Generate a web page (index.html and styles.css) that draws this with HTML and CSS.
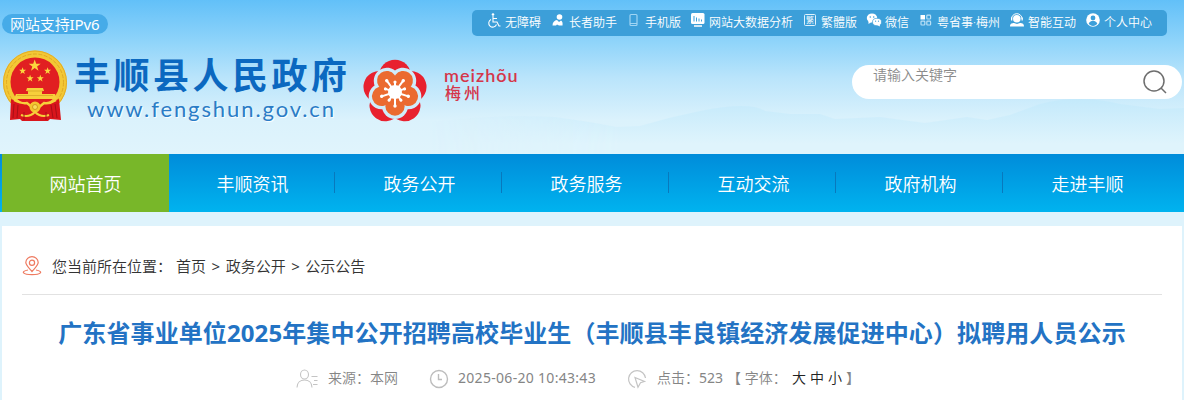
FILE: index.html
```
<!DOCTYPE html>
<html lang="zh-CN">
<head>
    <meta charset="UTF-8">
    <meta name="viewport" content="width=device-width, initial-scale=1.0">
    <title>丰顺县人民政府</title>
    <link rel="stylesheet" href="styles.css">
</head>
<body>
    <header class="header">
        <svg class="hills" width="1184" height="60" viewBox="0 0 1184 60">
            <defs>
                <linearGradient id="hill" gradientUnits="userSpaceOnUse" x1="0" y1="4" x2="0" y2="50">
                    <stop offset="0" stop-color="#c3e9fb"/>
                    <stop offset="1" stop-color="#dff4fc"/>
                </linearGradient>
                <linearGradient id="fade" gradientUnits="userSpaceOnUse" x1="430" y1="0" x2="620" y2="0">
                    <stop offset="0" stop-color="#000"/>
                    <stop offset="1" stop-color="#fff"/>
                </linearGradient>
                <mask id="left"><rect width="1184" height="60" fill="url(#fade)"/></mask>
            </defs>
            <path mask="url(#left)" fill="url(#hill)" d="M430 28 Q500 20 555 23 Q585 27 617 33 L640 32 Q670 23 700 17 Q750 7 765 17 L790 20 L820 20 L835 25 L880 23 L925 29 L967 23 L987 26 L1010 21 L1040 10 Q1078 0 1120 10 L1160 15 L1184 14 V60 H430 Z"/>
        </svg>

        <div class="top">
            <a class="ipv6">网站支持<span class="num">IPv6</span></a>
            <div class="tools">
                <a class="tool"><svg class="ico" viewBox="0 0 20 20"><g fill="none" stroke="#fff" stroke-width="1.1"><path d="M9 6v6h4l2 4h1.500M9 8.500h4M7 9.500a4 4 0 1 0 5.500 5"/></g><circle cx="9" cy="4.500" r="1.300" fill="#fff"/></svg>无障碍</a>
                <a class="tool"><svg class="ico" viewBox="0 0 20 20"><circle cx="11.500" cy="7" r="2.800" fill="#fff"/><path fill="#fff" d="M4.500 15.500c0-3.500 2-5 4.500-5.500L11 12l2-1.500q2 1 1.500 5H11l-2-1-1 1z"/></svg>长者助手</a>
                <a class="tool"><svg class="ico" viewBox="0 0 20 20"><rect x="6" y="4.500" width="7" height="11" rx="1" fill="none" stroke="#9fd5f4" stroke-width="1.200"/><path stroke="#9fd5f4" d="M6 13.500h7"/></svg>手机版</a>
                <a class="tool"><svg class="ico" viewBox="0 0 20 20"><rect x="3" y="3" width="13.500" height="11" rx="1.500" fill="#fff"/><path stroke="#3c9fd9" stroke-width="1" d="M6 6v5.500M8.500 7.500v4M11 8.500v3M13.500 9.500v2"/><path stroke="#fff" stroke-width="1.500" d="M6 16h8"/></svg>网站大数据分析</a>
                <a class="tool"><svg class="ico" viewBox="0 0 20 20"><rect x="4.500" y="4.500" width="11" height="11" rx="1" fill="none" stroke="#dff2fd"/><text x="6" y="13.200" font-size="8" fill="#fff">繁</text></svg>繁體版</a>
                <a class="tool"><svg class="ico" viewBox="0 0 20 20"><ellipse cx="8" cy="8" rx="5.200" ry="4.500" fill="#fff"/><path fill="#fff" d="M4.500 11v3l3-2z"/><ellipse cx="13" cy="12" rx="4.500" ry="3.700" fill="#fff" stroke="#3c9fd9" stroke-width=".7"/><path fill="#fff" d="M13 15l3 1.500-.5-3z"/><g fill="#3c9fd9"><circle cx="6.300" cy="7" r=".8"/><circle cx="9.700" cy="7" r=".8"/><circle cx="11.600" cy="11.200" r=".6"/><circle cx="14.500" cy="11.200" r=".6"/></g></svg>微信</a>
                <a class="tool"><svg class="ico" viewBox="0 0 20 20"><rect x="4.500" y="5" width="4.500" height="4.500" fill="#fff"/><g fill="none" stroke="#b9e0f6" stroke-width="1.200"><rect x="10.800" y="5.200" width="3.800" height="3.800" rx=".8"/><rect x="5" y="11.200" width="3.800" height="3.800" rx=".8"/><rect x="10.800" y="11.200" width="3.800" height="3.800" rx=".8"/></g></svg>粤省事·梅州</a>
                <a class="tool"><svg class="ico" viewBox="0 0 20 20"><path fill="none" stroke="#fff" d="M4.500 9a5.300 5.300 0 0 1 10.600 0"/><circle cx="9.800" cy="8.800" r="3.800" fill="#fff"/><path fill="#fff" d="M4 7.500h1.300v3H4zM14.500 7.500h1.300v3h-1.300zM3 16.500c0-3 2-3.500 4-3.500l3 1 3-1c2 0 4 .5 4 3.500z"/></svg>智能互动</a>
                <a class="tool"><svg class="ico" viewBox="0 0 20 20"><circle cx="10" cy="10" r="6.800" fill="#fff"/><circle cx="10" cy="8" r="2.400" fill="#3c9fd9"/><path fill="#3c9fd9" d="M5.700 13.500c1-2 2.500-2.500 4.300-2.500s3.300.5 4.300 2.500a5 5 0 0 1-8.600 0z"/></svg>个人中心</a>
            </div>
        </div>

        <div class="brand">
            <!-- national emblem -->
            <svg class="emblem" width="72" height="82" viewBox="0 0 72 82">
                <circle cx="35" cy="37.500" r="32" fill="#f3c835"/>
                <circle cx="35" cy="37.500" r="28.500" fill="none" stroke="#e0a824" stroke-width="1" stroke-dasharray="4 1.500"/>
                <circle cx="35" cy="37.500" r="31.500" fill="none" stroke="#e3ac25" stroke-width="1"/>
                <circle cx="35" cy="37" r="24.500" fill="#e11f21"/>
                <path fill="#fbd63d" d="M34.700 14.500l1.500 4.200h4.500l-3.600 2.700 1.400 4.300-3.800-2.600-3.700 2.600 1.300-4.300-3.600-2.700h4.500z"/>
                <g fill="#fbd63d">
                    <path id="s" d="M22.600 22.300l.9 2.500h2.600l-2.100 1.600.8 2.500-2.200-1.500-2.200 1.500.8-2.500-2.100-1.600h2.600z"/>
                    <use href="#s" x="25"/>
                    <use href="#s" x="7.500" y="7.500"/>
                    <use href="#s" x="17.700" y="7.500"/>
                </g>
                <path fill="#f7cf3b" d="M27 43h16l1 3h-2v3h13l2 5H14l2-5h12v-3h-2z"/>
                <path stroke="#cf9a20" stroke-width=".6" d="M27 46h16M17 50.500h36"/>
                <path fill="#d9151c" d="M11 54q10 5 20 3h8q10 2 20-3l2 21-11-1-2 2H22l-2-2-10 1z"/>
                <path fill="none" stroke="#f7cf3b" stroke-width="2.500" d="M14 55q8 4 13 3l6 5h5l6-5q6 1 12-3"/>
                <circle cx="35" cy="62" r="5.500" fill="#f3c52f"/>
                <circle cx="35" cy="62" r="2.500" fill="#f8dc59" stroke="#c98d18" stroke-width=".8"/>
                <path fill="none" stroke="#f7cf3b" stroke-width="2" d="M21 70q8 3 14-3 6 6 14 3"/>
                <path fill="none" stroke="#a80f16" stroke-width="1" d="M14 59l-1 14M18 60l-1 13M55 59l2 14M51 60l2 13M24 67v8M46 67v8"/>
            </svg>
            <div class="name">
                <div class="name-cn">丰顺县人民政府</div>
                <div class="name-url">www.fengshun.gov.cn</div>
            </div>
            <!-- plum blossom -->
            <svg class="plum" width="70" height="70" viewBox="-35 -35 70 70">
                <g fill="#e8212f">
                    <circle cy="-16.500" r="15.800"/>
                    <circle cy="-16.500" r="15.800" transform="rotate(72)"/>
                    <circle cy="-16.500" r="15.800" transform="rotate(144)"/>
                    <circle cy="-16.500" r="15.800" transform="rotate(216)"/>
                    <circle cy="-16.500" r="15.800" transform="rotate(288)"/>
                </g>
                <g fill="#cfecfb">
                    <circle cy="14" r="13"/>
                    <circle cy="14" r="13" transform="rotate(72)"/>
                    <circle cy="14" r="13" transform="rotate(144)"/>
                    <circle cy="14" r="13" transform="rotate(216)"/>
                    <circle cy="14" r="13" transform="rotate(288)"/>
                </g>
                <g fill="#eb6a30">
                    <circle r="14"/>
                    <circle cy="14" r="9.700"/>
                    <circle cy="14" r="9.700" transform="rotate(72)"/>
                    <circle cy="14" r="9.700" transform="rotate(144)"/>
                    <circle cy="14" r="9.700" transform="rotate(216)"/>
                    <circle cy="14" r="9.700" transform="rotate(288)"/>
                </g>
                <g stroke="#fff" stroke-width="2" stroke-linecap="round">
                    <path id="ray" d="M0 0V14M0 0V-10"/>
                    <use href="#ray" transform="rotate(72)"/>
                    <use href="#ray" transform="rotate(144)"/>
                    <use href="#ray" transform="rotate(216)"/>
                    <use href="#ray" transform="rotate(288)"/>
                </g>
                <g fill="#fff">
                    <circle r="7"/>
                    <path id="dots" d="M-1.700 14a1.700 1.700 0 1 0 3.400 0a1.700 1.700 0 1 0-3.400 0M-1.600-10a1.600 1.600 0 1 0 3.200 0a1.600 1.600 0 1 0-3.200 0"/>
                    <use href="#dots" transform="rotate(72)"/>
                    <use href="#dots" transform="rotate(144)"/>
                    <use href="#dots" transform="rotate(216)"/>
                    <use href="#dots" transform="rotate(288)"/>
                </g>
            </svg>
            <div class="city">
                <div class="city-en">meizhõu</div>
                <div class="city-cn">梅州</div>
            </div>
            <form class="search">
                <span class="search-hint">请输入关键字</span>
                <svg class="search-icon" width="26" height="26" viewBox="0 0 26 26"><g fill="none" stroke="#6e6e6e" stroke-width="1.500"><circle cx="12" cy="12" r="10"/><path d="M19 19l5 5"/></g></svg>
            </form>
        </div>
    </header>

    <nav class="nav">
        <a class="nav-item active">网站首页</a>
        <a class="nav-item">丰顺资讯</a>
        <a class="nav-item">政务公开</a>
        <a class="nav-item">政务服务</a>
        <a class="nav-item">互动交流</a>
        <a class="nav-item">政府机构</a>
        <a class="nav-item">走进丰顺</a>
    </nav>

    <main class="content">
        <div class="crumbs">
            <svg class="pin" width="20" height="20" viewBox="0 0 20 20"><g fill="none" stroke="#ee7a60" stroke-width="1.200"><path d="M10 15.500C6 11 3.800 9 3.800 6.600a6.200 6.000 0 0 1 12.400 0C16.200 9 14 11 10 15.500z"/><circle cx="10" cy="6.800" r="2.600"/><path d="M6 14c-8 1.500-5 4.700 4 4.700s12-3.200 4-4.700"/></g></svg>
            <span class="crumbs-label">您当前所在位置：</span>
            <a>首页</a>
            <span class="num">&gt;</span>
            <a>政务公开</a>
            <span class="num">&gt;</span>
            <a>公示公告</a>
        </div>

        <h1 class="title">广东省事业单位2025年集中公开招聘高校毕业生（丰顺县丰良镇经济发展促进中心）拟聘用人员公示</h1>

        <div class="meta">
            <svg class="meta-icon" width="22" height="20" viewBox="0 0 22 20"><g fill="none" stroke="#c4c4c4" stroke-width="1.100"><ellipse cx="8.500" cy="5.500" rx="4" ry="4.500"/><path d="M1 18.500c0-5 3.500-7.500 7.500-7.500s7.500 2.500 7.500 7.500M15.500 7.500h6M18 11.500h3.500M17 15.500h4.500"/></g></svg>
            <span class="source">来源：本网</span>
            <svg class="meta-icon" width="20" height="20" viewBox="0 0 20 20"><g fill="none" stroke="#bdbdbd" stroke-width="1.400"><circle cx="10" cy="10" r="8.500"/><path d="M9.500 5v5.500H13"/></g></svg>
            <span class="date num">2025-06-20 10:43:43</span>
            <svg class="meta-icon" width="20" height="20" viewBox="0 0 20 20"><g fill="none" stroke="#c4c4c4" stroke-width="1.200"><path d="M8 18.300A8.500 8.500 0 1 1 18.500 9"/><path d="M8 8.500l9.500 4-4 1.300-2.500 4.500z"/></g></svg>
            <span class="hits">点击：<span class="num">523</span></span>
            <span class="size">【 字体：</span>
            <span class="sizes"><a>大</a><a>中</a><a>小</a></span>
            <span class="size-end">】</span>
        </div>
    </main>
</body>
</html>
```
FILE: styles.css
```
* {
    box-sizing: border-box;
}
body {
    margin: 0;
    height: 400px;
    overflow: hidden;
    background: #def3fc;
    color: #333;
    font-family: 'Noto Sans', 'Noto Sans CJK SC', sans-serif;
    font-weight: 350;
}
.num {
    font-weight: 400;
}
.header {
    position: relative;
    height: 154px;
    background: linear-gradient(180deg, #62c0f8 0%, #8fd4fa 27%, #b9e4fb 50%, #dbf2fc 78%, #e0f4fc 100%);
}
.hills {
    position: absolute;
    left: 0;
    bottom: 0;
}
.top {
    position: relative;
    display: flex;
    justify-content: space-between;
    height: 45px;
    padding: 10px 17px 0 2px;
    color: #fff;
}
.ipv6 {
    width: 106px;
    height: 20px;
    margin-top: 4px;
    padding: 0 8px;
    border-radius: 10px;
    background: #46abe8;
    font-size: 15px;
    line-height: 20px;
    letter-spacing: -.1px;
    white-space: nowrap;
}
.tools {
    display: flex;
    width: 695px;
    height: 26px;
    padding: 0 0 0 5px;
    border-radius: 5px;
    background: #3c9fd9;
    font-size: 12px;
    line-height: 26px;
    white-space: nowrap;
}
.tool {
    display: flex;
    margin-left: 7px;
}
.ico {
    width: 20px;
    height: 20px;
    margin-right: 1px;
    flex: none;
}
.brand {
    position: relative;
    display: flex;
    align-items: flex-start;
}
.name {
    margin-left: 2px;
    width: 286px;
    white-space: nowrap;
}
.name-cn {
    margin-top: 10px;
    font-size: 36px;
    font-weight: 700;
    letter-spacing: 3.5px;
    line-height: 42px;
    color: #0b68c0;
}
.name-url {
    margin-left: 13px;
    font-family: Lato, sans-serif;
    font-size: 22px;
    font-weight: 400;
    letter-spacing: 1.9px;
    line-height: 24px;
    color: #2a7cc6;
    text-shadow: 1px 1px 1px #fff;
}
.plum {
    margin-top: 12px;
}
.city {
    margin: 20px 0 0 14px;
    color: #d5354a;
    white-space: nowrap;
}
.city-en {
    font-family: Lato, sans-serif;
    font-size: 18px;
    font-weight: 600;
    letter-spacing: 1px;
    line-height: 20px;
}
.city-cn {
    padding-left: 1px;
    font-size: 16px;
    font-weight: 500;
    letter-spacing: 3px;
    line-height: 16px;
}
.search {
    display: flex;
    justify-content: space-between;
    width: 330px;
    height: 34px;
    margin: 20px 2px 0 auto;
    padding: 0 14px 0 21px;
    border-radius: 17px;
    background: #fff;
}
.search-hint {
    font-size: 14px;
    line-height: 20px;
    color: #8b8b8b;
}
.search-icon {
    margin-top: 4px;
}
.nav {
    display: flex;
    height: 58px;
    padding: 0 2px;
    background: linear-gradient(180deg, #008cda 0%, #00b3ef 100%);
}
.nav-item {
    display: flex;
    align-items: center;
    justify-content: center;
    width: 167px;
    height: 58px;
    font-size: 18px;
    color: #fff;
    background: linear-gradient(#0879bd, #0879bd) no-repeat 165px 18px / 1px 21px;
}
.nav-item:last-child {
    background: none;
}
.active {
    background: #78b729;
}
.content {
    height: 174px;
    margin: 14px 2px 0;
    padding: 0 20px;
    background: #fff;
}
.crumbs {
    display: flex;
    align-items: center;
    gap: 5.5px;
    height: 69px;
    padding-top: 11px;
    border-bottom: 1px solid #e2e2e2;
    font-size: 15px;
}
.pin {
    margin-right: 4.5px;
}
.crumbs-label {
    margin-right: -1.5px;
}
.title {
    margin: 20px 0 0;
    font-size: 24px;
    font-weight: 700;
    line-height: 36px;
    letter-spacing: .1px;
    text-align: center;
    white-space: nowrap;
    color: #2373c4;
}
.meta {
    display: flex;
    align-items: center;
    height: 20px;
    margin-top: 16px;
    padding-left: 274px;
    font-size: 14px;
    color: #858585;
    white-space: nowrap;
}
.meta-icon {
    flex: none;
    margin-top: 4px;
}
.source {
    width: 101px;
    margin-left: 10px;
}
.date {
    width: 169px;
    margin-left: 9px;
    letter-spacing: .3px;
}
.hits {
    width: 70px;
    margin-left: 10px;
}
.size {
    width: 65px;
}
.sizes {
    display: flex;
    gap: 4px;
    color: #222;
}
.size-end {
    margin-left: 4px;
}
```
